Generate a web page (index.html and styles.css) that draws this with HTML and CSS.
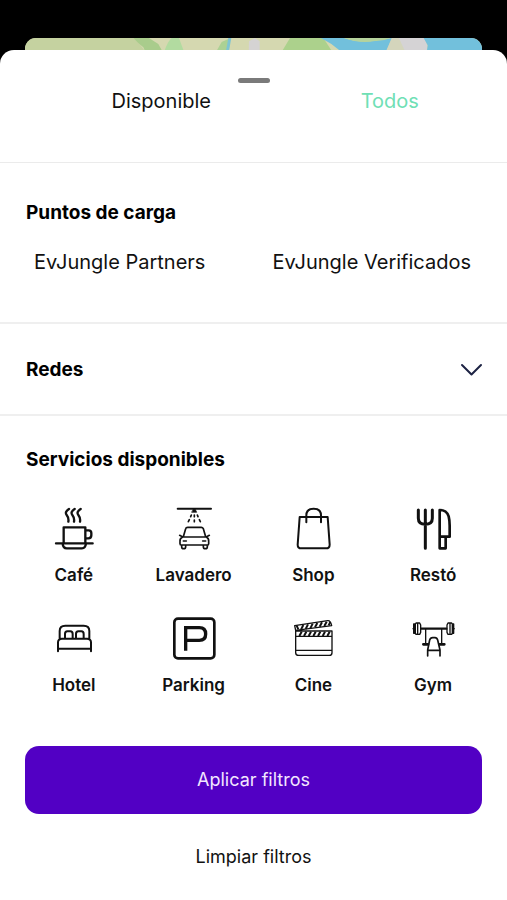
FILE: index.html
```html
<!DOCTYPE html>
<html lang="es">
<head>
<meta charset="utf-8">
<meta name="viewport" content="width=device-width, initial-scale=1">
<title>Filtros</title>
<link rel="stylesheet" href="styles.css">
</head>
<body>
<div class="map" aria-hidden="true">
  <svg viewBox="0 0 1371 84" preserveAspectRatio="xMidYMin slice">
    <rect width="1371" height="84" fill="#d5d8b0"/>
    <path d="M0 0H330L360 40V84H0Z" fill="#c5d2a0"/>
    <path d="M326 0H372Q384 8 400 18L412 40V84H380L355 28Q335 12 326 0Z" fill="#a9cc8c"/>
    <path d="M418 40Q428 10 440 0H462L476 38V84H418Z" fill="#b2dba0"/>
    <path d="M590 12L616 0L606 84H575V38Z" fill="#acd194"/>
    <path d="M610 0H619L612 38V84H603V38Z" fill="#7fc4d2"/>
    <path d="M672 10L690 0L704 10V84H670Z" fill="#d5d3d3"/>
    <path d="M795 0H895L920 38V84H760L772 38Z" fill="#acd18c"/>
    <path d="M888 0H958Q1010 18 1055 6L1102 0L1084 38V84H945V38Q920 16 888 0Z" fill="#72c0dc"/>
    <path d="M956 0H1096Q1075 10 1050 9Q1005 18 956 0Z" fill="#b5d39c"/>
    <path d="M1100 0H1198L1206 22L1200 84H1084V38Z" fill="#d4d5bc"/>
    <path d="M1122 0H1198Q1210 20 1205 40H1140L1130 18Z" fill="#d5d3d5"/>
    <path d="M1196 0H1371V84H1200L1208 22Z" fill="#72c0dc"/>
  </svg>
</div>
<main class="sheet">
  <div class="availability">
    <span class="handle"></span>
    <div class="tabs">
      <button type="button" class="option">Disponible</button>
      <button type="button" class="option option-active">Todos</button>
    </div>
  </div>

  <section class="points">
    <h2 class="heading">Puntos de carga</h2>
    <div class="choices">
      <button type="button" class="option">EvJungle Partners</button>
      <button type="button" class="option">EvJungle Verificados</button>
    </div>
  </section>

  <section class="networks">
    <h2 class="heading">
      <button type="button" class="expander" aria-expanded="false">
        Redes
        <svg class="chevron" viewBox="0 0 24 24" fill="none" stroke="#1d2344" stroke-width="2" stroke-linecap="round" stroke-linejoin="round"><path d="M3 7L12.500 16.500L22 7"/></svg>
      </button>
    </h2>
  </section>

  <section class="services">
    <h2 class="heading">Servicios disponibles</h2>
    <div class="service-grid">
      <button type="button" class="service">
        <svg class="icon" viewBox="60 27 144 144" stroke-width="7">
          <path d="M117 42Q103 51 110 60T115 80M134 42Q120 51 127 60T132 80M152 42Q138 51 145 60T150 80"/>
          <path d="M101 145V97H166V145M166 106H176Q184 106 184 114V121Q184 130 175 130H166M78 145H188M98 146Q99 160 110 160H156Q166 160 168 146"/>
        </svg>
        Café
      </button>
      <button type="button" class="service">
        <svg class="icon" viewBox="74 27 144 144" stroke-width="5">
          <path d="M97 41H197" stroke-width="6"/>
          <path d="M144 43H150L154 52H140Z" fill="#111" stroke-width="2"/>
          <path d="M147 60V65M147 75V80M138 60L136 65M132 74L129 80M156 60L158 65M162 74L165 80"/>
          <path d="M114 125L121 101Q122 97 127 97H168Q172 97 174 101L181 125M112 126H183Q191 130 190 139V146Q190 150 185 150H109Q104 150 104 146V139Q103 130 112 126ZM109 151V155Q109 161 115 161T121 155V151M174 151V155Q174 161 180 161T186 155V151M103 121L111 125M192 121L184 125"/>
          <path d="M114 138H123M172 138H181" stroke-width="5"/>
        </svg>
        Lavadero
      </button>
      <button type="button" class="service">
        <svg class="icon" viewBox="88 27 144 144" stroke-width="6">
          <path d="M120 66H204L210 149Q210 160 199 160H125Q114 160 114 149ZM140 82V61Q140 41 162 41Q184 41 184 61V82"/>
        </svg>
        Shop
      </button>
      <button type="button" class="service">
        <svg class="icon" viewBox="87 27 144 144" stroke-width="9">
          <path d="M115 45V70Q115 88 136 88Q157 88 157 70V45M136 45V160"/>
          <path d="M179 45Q200 45 206 64Q209 76 209 92V125H179ZM179 125V160H197V125" stroke-width="8"/>
        </svg>
        Restó
      </button>
      <button type="button" class="service">
        <svg class="icon" viewBox="60 27 144 144" stroke-width="6">
          <path d="M89 102V78Q89 62 106 62H161Q178 62 178 78V102M84 139V112Q84 101 96 101H171Q183 101 183 112V139M84 131H183M105 100V87Q105 79 112 79H121Q128 79 128 87V100M138 100V87Q138 79 145 79H154Q161 79 161 87V100"/>
        </svg>
        Hotel
      </button>
      <button type="button" class="service">
        <svg class="icon" viewBox="74 27 144 144" stroke-width="8">
          <rect x="87" y="41" width="120" height="119" rx="11"/>
          <path d="M121 137V68H162Q181 68 181 87T162 106H121" stroke-width="10" stroke-linecap="butt" stroke-linejoin="miter"/>
        </svg>
        Parking
      </button>
      <button type="button" class="service">
        <svg class="icon" viewBox="88 27 144 144" stroke-width="4">
          <path d="M108 78H217V143Q217 151 209 151H117Q108 151 108 143ZM108 94H217M108 136H217M108 76L105 62L204 47Q213 46 216 62Z"/>
          <path d="M119 93L126 80M133 93L140 80M147 93L154 80M161 93L168 80M175 93L182 80M189 93L196 80M203 93L210 80M111 62L116 73M124 74L131 60M138 72L145 58M152 70L159 56M166 67L173 54M180 65L187 52M194 63L201 50M207 61L212 51" stroke-width="6" stroke-linecap="butt"/>
        </svg>
        Cine
      </button>
      <button type="button" class="service">
        <svg class="icon" viewBox="87 27 144 144" stroke-width="5">
          <path d="M124 71H199" stroke-width="7"/>
          <path d="M106 57H101V85H106ZM108 54H119L122 60V82L119 88H108L105 82V60ZM204 54H215L218 60V82L215 88H204L201 82V60ZM217 57H221V85H217ZM99 71H104M219 71H223M113 55V87M210 55V87" stroke-width="4"/>
          <path d="M137 73V117M185 73V117" stroke-width="4"/>
          <path d="M130 118H144M179 118H193" stroke-width="8"/>
          <path d="M143 153V135L149 105Q151 98 158 98H165Q171 98 173 105L180 135V153M143 136H180"/>
        </svg>
        Gym
      </button>
    </div>
  </section>

  <div class="actions">
    <button type="button" class="apply">Aplicar filtros</button>
    <button type="button" class="clear">Limpiar filtros</button>
  </div>
</main>
</body>
</html>
```
FILE: styles.css
```css
* {
  box-sizing: border-box;
}

body {
  margin: 0;
  min-height: 100vh;
  padding-top: 38px;
  display: flex;
  flex-direction: column;
  background: #000;
  color: #111;
  font-family: Inter, "Liberation Sans", sans-serif;
  font-size: 20px;
  line-height: 24px;
}

button {
  margin: 0;
  padding: 0;
  border: 0;
  background: none;
  color: inherit;
  font: inherit;
  cursor: pointer;
}

.map {
  height: 28px;
  margin: 0 25px -16px;
  border-radius: 11px 11px 0 0;
  overflow: hidden;
}

.map svg {
  display: block;
  width: 100%;
  height: 100%;
}

.sheet {
  position: relative;
  flex: 1;
  background: #fff;
  border-radius: 14px 14px 0 0;
}

.availability {
  display: flex;
  flex-direction: column;
  align-items: center;
  gap: 6px;
  padding: 28px 0 49px;
  border-bottom: 1px solid #ebebeb;
}

.handle {
  width: 32px;
  height: 5px;
  border-radius: 3px;
  background: #7a7a7a;
}

.tabs {
  align-self: stretch;
  display: grid;
  grid-template-columns: 1fr 1fr;
  padding: 0 3px 0 47px;
}

.option-active {
  color: #6fe0b5;
}

.points {
  padding: 38px 0 48px;
  border-bottom: 2px solid #efefef;
}

.heading {
  margin: 0;
  padding: 0 24px 0 26px;
  font-size: 19px;
  font-weight: 700;
  color: #000;
}

.choices {
  display: flex;
  flex-wrap: wrap;
  justify-content: space-between;
  margin-top: 25px;
  padding: 0 36px 0 34px;
}

.networks {
  border-bottom: 2px solid #efefef;
}

.expander {
  display: flex;
  align-items: center;
  justify-content: space-between;
  width: 100%;
  padding: 34px 0 32px;
}

.chevron {
  width: 24px;
  height: 24px;
}

.services {
  padding-top: 32px;
}

.service-grid {
  display: grid;
  grid-template-columns: repeat(4, 1fr);
  row-gap: 27px;
  margin-top: 32px;
  padding: 0 14px;
}

.service {
  display: flex;
  flex-direction: column;
  align-items: center;
  gap: 11px;
  font-size: 17px;
  font-weight: 600;
}

.icon {
  width: 48px;
  height: 48px;
  fill: none;
  stroke: #111;
  stroke-linecap: round;
  stroke-linejoin: round;
}

.actions {
  display: flex;
  flex-direction: column;
  gap: 31px;
  padding: 49px 25px 30px;
  font-size: 18px;
}

.apply {
  padding: 22px;
  border-radius: 14px;
  background: #5200c4;
  color: #f3e6ff;
}
```
